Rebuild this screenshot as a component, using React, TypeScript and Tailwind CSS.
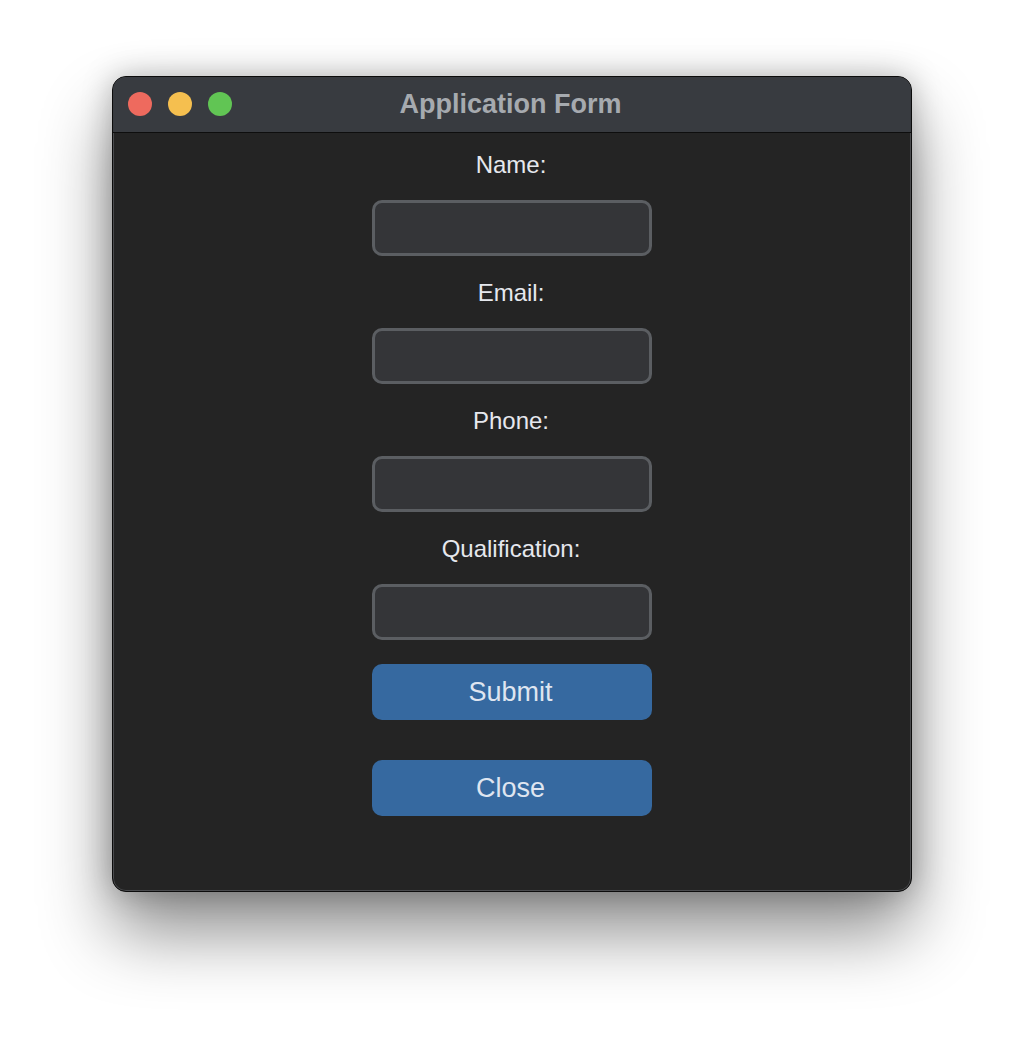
import React from "react";

const fields = ["Name:", "Email:", "Phone:", "Qualification:"];

export default function App() {
  return (
    <div
      className="flex h-[1040px] w-[1024px] justify-center bg-white pt-[76px]"
      style={{ fontFamily: '"Liberation Sans", Arial, sans-serif' }}
    >
      <div className="flex h-[816px] w-[800px] flex-col overflow-hidden rounded-[14px] border border-[#0c0c0c] bg-[#242424] shadow-[0_40px_70px_rgba(0,0,0,0.45),0_0_30px_rgba(0,0,0,0.25)] ring-1 ring-inset ring-[#4a4b4e]">
        {/* title bar */}
        <div className="relative flex h-[56px] shrink-0 items-center justify-center border-b border-[#0e0e0e] bg-[#383b40] pr-[3px]">
          <div className="absolute left-[15px] top-[15px] flex gap-[16px]">
            <span className="h-[24px] w-[24px] rounded-full bg-[#ee6a5e]" />
            <span className="h-[24px] w-[24px] rounded-full bg-[#f5bf4f]" />
            <span className="h-[24px] w-[24px] rounded-full bg-[#61c554]" />
          </div>
          <span className="text-[27px] font-bold text-[#a6aaaf]">Application Form</span>
        </div>

        {/* form */}
        <div className="flex flex-col items-center pt-[18px]">
          {fields.map((f, i) => (
            <div key={f} className={"flex flex-col items-center " + (i > 0 ? "mt-[23px]" : "")}>
              <label className="h-[28px] pr-[2px] text-[24px] leading-[28px] text-[#e6e8ee]">{f}</label>
              <input
                type="text"
                className="mt-[21px] h-[56px] w-[280px] rounded-[10px] border-[3px] border-[#5b5e62] bg-[#343538] px-3 text-[20px] text-white outline-none"
              />
            </div>
          ))}
          <button className="mt-[24px] h-[56px] w-[280px] rounded-[10px] bg-[#3669a0] pr-[3px] text-[27px] text-[#dfe5f0]">
            Submit
          </button>
          <button className="mt-[40px] h-[56px] w-[280px] rounded-[10px] bg-[#3669a0] pr-[3px] text-[27px] text-[#dfe5f0]">
            Close
          </button>
        </div>
      </div>
    </div>
  );
}
